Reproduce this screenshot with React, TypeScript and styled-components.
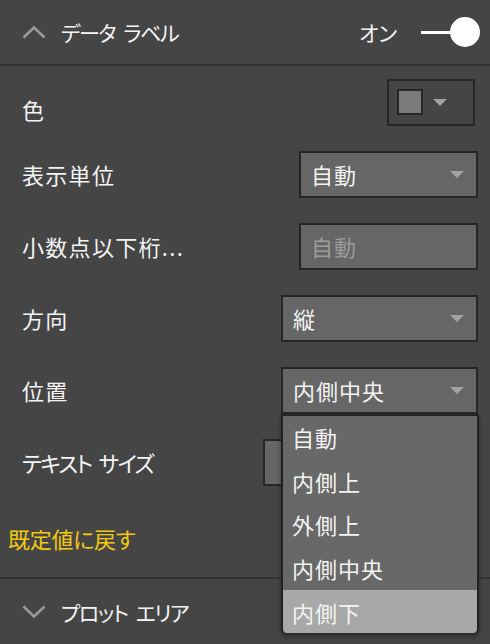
import React from 'react';
import styled, { createGlobalStyle } from 'styled-components';

const GlobalStyle = createGlobalStyle`
  body {
    margin: 0;
    background: #454545;
    font-family: "Noto Sans CJK JP", "Noto Sans", sans-serif;
    color: #f4f4f4;
  }
`;

const Panel = styled.div`
  width: 490px;
  height: 644px;
  overflow: hidden;
  background: #454545;
`;

const SectionHeader = styled.div<{ $height: number }>`
  height: ${(p) => p.$height}px;
  display: flex;
  align-items: center;
  padding: 0 10px 0 22px;
  box-sizing: border-box;
  border-bottom: 2px solid #333333;
  &:last-child {
    border-bottom: none;
  }
`;

const HeaderTitle = styled.span`
  margin-left: 15px;
  font-size: 21px;
  font-feature-settings: "palt";
  letter-spacing: -1.5px;
  word-spacing: 5px;
  flex: 1;
`;

const OnLabel = styled.span`
  font-size: 21px;
  font-feature-settings: "palt";
  margin-right: 24px;
`;

const Toggle = styled.div`
  width: 59px;
  height: 30px;
  display: flex;
  align-items: center;
  &::before {
    content: '';
    width: 32px;
    height: 3px;
    background: #ffffff;
  }
  &::after {
    content: '';
    width: 30px;
    height: 30px;
    border-radius: 50%;
    background: #ffffff;
    margin-left: -3px;
  }
`;

const Rows = styled.div`
  padding: 0 12px 0 22px;
`;

const Row = styled.div`
  height: 72px;
  display: flex;
  align-items: center;
  justify-content: space-between;
`;

const Label = styled.span<{ $drop?: number; $kana?: boolean }>`
  font-size: 22px;
  letter-spacing: ${(p) => (p.$kana ? '-1.8px' : '1.3px')};
  word-spacing: ${(p) => (p.$kana ? '4px' : '0')};
  font-feature-settings: "palt";
  margin-top: ${(p) => p.$drop ?? 0}px;
`;

const Control = styled.div<{ $width: number; $muted?: boolean }>`
  position: relative;
  width: ${(p) => p.$width}px;
  height: 47px;
  box-sizing: border-box;
  border: 2px solid #262626;
  background: #666666;
  display: flex;
  align-items: center;
  padding: 0 12px 0 10px;
  font-size: 22px;
  letter-spacing: 1px;
  color: ${(p) => (p.$muted ? '#9c9c9c' : '#f4f4f4')};
`;

const Value = styled.span`
  flex: 1;
`;

const Arrow = styled.span`
  width: 0;
  height: 0;
  border-left: 7px solid transparent;
  border-right: 7px solid transparent;
  border-top: 7px solid #a3a3a3;
  filter: blur(0.4px);
`;

const ColorBox = styled.div`
  width: 88px;
  height: 47px;
  box-sizing: border-box;
  border: 2px solid #262626;
  display: flex;
  align-items: center;
  padding-left: 8px;
  gap: 10px;
  margin-right: 3px;
`;

const Swatch = styled.span`
  width: 26px;
  height: 26px;
  box-sizing: border-box;
  border: 2px solid #262626;
  background: #7a7a7a;
`;

const List = styled.ul`
  position: absolute;
  top: calc(100% + 2px);
  left: -2px;
  right: -3px;
  margin: 0;
  padding: 0;
  list-style: none;
  background: #686868;
  border: 2px solid #232323;
  border-bottom: none;
  border-radius: 0 0 5px 5px;
  overflow: hidden;
  box-shadow: 0 3px 4px rgba(0, 0, 0, 0.45);
  z-index: 2;
`;

const Item = styled.li<{ $active?: boolean }>`
  height: 43.6px;
  display: flex;
  align-items: center;
  padding-left: 9px;
  font-size: 22px;
  letter-spacing: 1px;
  background: ${(p) => (p.$active ? '#a8a8a8' : 'transparent')};
`;

const ResetLink = styled.div`
  height: 79px;
  display: flex;
  align-items: center;
  padding: 0 8px;
  color: #f2c811;
  font-size: 22px;
  letter-spacing: -0.3px;
  font-feature-settings: "palt";
  border-bottom: 2px solid #333333;
`;

const Chevron = ({ up }: { up: boolean }) => (
  <svg width="24" height="14" viewBox="0 0 24 14">
    <path
      d={up ? 'M1.5 12.5 L12 2.5 L22.5 12.5' : 'M1.5 1.5 L12 11.5 L22.5 1.5'}
      fill="none"
      stroke="#9a9a9a"
      strokeWidth="2.6"
    />
  </svg>
);

const positions = ['自動', '内側上', '外側上', '内側中央', '内側下'];

export default function App() {
  return (
    <Panel>
      <GlobalStyle />
      <SectionHeader $height={66}>
        <Chevron up />
        <HeaderTitle>データ ラベル</HeaderTitle>
        <OnLabel>オン</OnLabel>
        <Toggle />
      </SectionHeader>
      <Rows>
        <Row>
          <Label $drop={13}>色</Label>
          <ColorBox>
            <Swatch />
            <Arrow />
          </ColorBox>
        </Row>
        <Row>
          <Label>表示単位</Label>
          <Control $width={179}>
            <Value>自動</Value>
            <Arrow />
          </Control>
        </Row>
        <Row>
          <Label>小数点以下桁...</Label>
          <Control $width={179} $muted>
            <Value>自動</Value>
          </Control>
        </Row>
        <Row>
          <Label>方向</Label>
          <Control $width={197}>
            <Value>縦</Value>
            <Arrow />
          </Control>
        </Row>
        <Row>
          <Label>位置</Label>
          <Control $width={197}>
            <Value>内側中央</Value>
            <Arrow />
            <List>
              {positions.map((p, i) => (
                <Item key={p} $active={i === positions.length - 1}>
                  {p}
                </Item>
              ))}
            </List>
          </Control>
        </Row>
        <Row>
          <Label $kana>テキスト サイズ</Label>
          <Control $width={215} />
        </Row>
      </Rows>
      <ResetLink>既定値に戻す</ResetLink>
      <SectionHeader $height={66}>
        <Chevron up={false} />
        <HeaderTitle>プロット エリア</HeaderTitle>
      </SectionHeader>
    </Panel>
  );
}
